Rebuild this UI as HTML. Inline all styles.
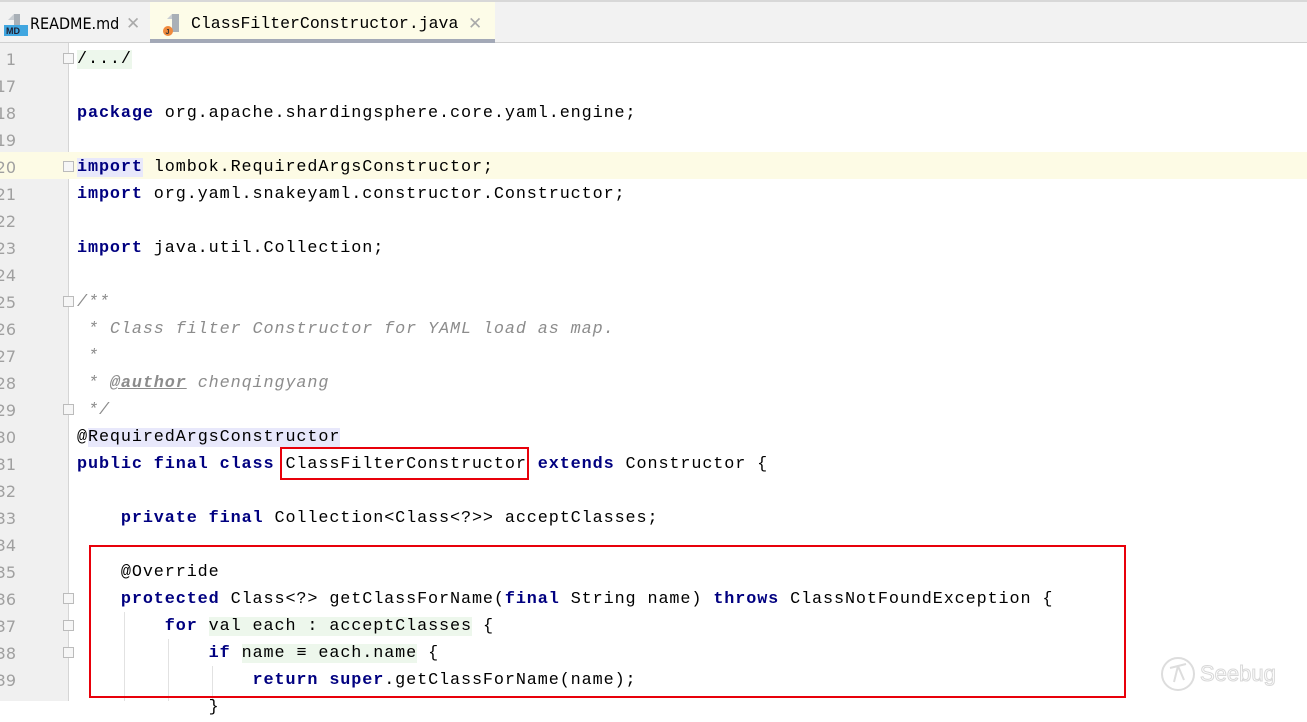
<!DOCTYPE html>
<html><head><meta charset="utf-8">
<style>
*{margin:0;padding:0;box-sizing:border-box}
body{width:1307px;height:701px;overflow:hidden;background:#fff;position:relative;font-family:"Liberation Mono",monospace}
.tabs{position:absolute;left:0;top:0;width:1307px;height:43px;background:#f2f2f2;border-top:2px solid #d8d8d8;border-bottom:1px solid #d0d0d0}
.tab{position:absolute;top:0;height:41px;font-size:15px;line-height:43px;color:#000;font-family:"Liberation Sans",sans-serif}
.act{left:150px;width:345px;background:#fdfce8;border-bottom:4px solid #a3a9b7}
.gut{position:absolute;left:0;top:43px;width:69px;height:658px;background:#f0f0f0;border-right:1px solid #d5d5d5}
.hl{position:absolute;left:0;top:152px;width:1307px;height:27px;background:#fdfbe5}
.ln{position:absolute;right:1291px;width:40px;text-align:right;font-size:16px;color:#a0a0a0;font-family:"DejaVu Sans",sans-serif;height:27px;line-height:29px}
.c{position:absolute;left:77px;height:27px;line-height:29px;font-size:16.8px;letter-spacing:0.9px;white-space:pre;color:#000}
.k{color:#000080;font-weight:bold}
.cm{color:#8c8c8c;font-style:italic}
.g{background:#edf7ec}
.a{background:#e8e8fb}
.fold{position:absolute;left:63px;width:11px;height:11px;border:1px solid #bbb;background:#f6f6f6}
.rb{position:absolute;border:2px solid #e8000a}
.guide{position:absolute;width:1px;background:#e2e2e2}
</style></head><body>
<div class="tabs">
  <div class="tab" style="left:4px;width:146px">
    <svg style="position:absolute;left:0px;top:11px" width="24" height="24"><path d="M10 1h6v12H10z" fill="#a9b0b7"/><path d="M10 1l-6 6h6z" fill="#c9ced3"/><rect x="0" y="12" width="24" height="11" fill="#40a6e0"/><text x="2" y="21" font-size="9" font-family="Liberation Sans" fill="#223" font-weight="bold">MD</text></svg>
    <span style="position:absolute;left:26px;font-size:16px;font-family:'DejaVu Sans Condensed','DejaVu Sans',sans-serif">README.md</span>
    <span style="position:absolute;left:122px;color:#aaa;font-size:17px">✕</span>
  </div>
  <div class="tab act">
    <svg style="position:absolute;left:12px;top:10px" width="22" height="24"><path d="M10 2h7v18H10z" fill="#a9b0b7"/><path d="M10 2l-5 5h5z" fill="#c9ced3"/><circle cx="6" cy="19" r="5" fill="#f08a3c"/><text x="3.5" y="22" font-size="7" font-family="Liberation Sans" fill="#333" font-weight="bold">J</text></svg>
    <span style="position:absolute;left:41px;font-size:16.5px;font-family:'Liberation Mono',monospace">ClassFilterConstructor.java</span>
    <span style="position:absolute;left:318px;color:#aaa;font-size:17px">✕</span>
  </div>
</div>
<div class="gut"></div>
<div class="hl"></div>

<div class="ln" style="top:45px">1</div>
<div class="ln" style="top:72px">17</div>
<div class="ln" style="top:99px">18</div>
<div class="ln" style="top:126px">19</div>
<div class="ln" style="top:153px">20</div>
<div class="ln" style="top:180px">21</div>
<div class="ln" style="top:207px">22</div>
<div class="ln" style="top:234px">23</div>
<div class="ln" style="top:261px">24</div>
<div class="ln" style="top:288px">25</div>
<div class="ln" style="top:315px">26</div>
<div class="ln" style="top:342px">27</div>
<div class="ln" style="top:369px">28</div>
<div class="ln" style="top:396px">29</div>
<div class="ln" style="top:423px">30</div>
<div class="ln" style="top:450px">31</div>
<div class="ln" style="top:477px">32</div>
<div class="ln" style="top:504px">33</div>
<div class="ln" style="top:531px">34</div>
<div class="ln" style="top:558px">35</div>
<div class="ln" style="top:585px">36</div>
<div class="ln" style="top:612px">37</div>
<div class="ln" style="top:639px">38</div>
<div class="ln" style="top:666px">39</div>

<div class="fold" style="top:53px"></div>
<div class="fold" style="top:161px"></div>
<div class="fold" style="top:296px"></div>
<div class="fold" style="top:404px"></div>
<div class="fold" style="top:593px"></div>
<div class="fold" style="top:620px"></div>
<div class="fold" style="top:647px"></div>

<div class="guide" style="left:124px;top:612px;height:89px"></div>
<div class="guide" style="left:168px;top:639px;height:62px"></div>
<div class="guide" style="left:212px;top:666px;height:35px"></div>

<div class="c" style="top:45px"><span class="g">/.../</span></div>
<div class="c" style="top:99px"><span class="k">package</span> org.apache.shardingsphere.core.yaml.engine;</div>
<div class="c" style="top:153px"><span class="k a">import</span> lombok.RequiredArgsConstructor;</div>
<div class="c" style="top:180px"><span class="k">import</span> org.yaml.snakeyaml.constructor.Constructor;</div>
<div class="c" style="top:234px"><span class="k">import</span> java.util.Collection;</div>
<div class="c cm" style="top:288px">/**</div>
<div class="c cm" style="top:315px"> * Class filter Constructor for YAML load as map.</div>
<div class="c cm" style="top:342px"> *</div>
<div class="c cm" style="top:369px"> * <b style="text-decoration:underline">@author</b> chenqingyang</div>
<div class="c cm" style="top:396px"> */</div>
<div class="c" style="top:423px">@<span class="a">RequiredArgsConstructor</span></div>
<div class="c" style="top:450px"><span class="k">public final class</span> ClassFilterConstructor <span class="k">extends</span> Constructor {</div>
<div class="c" style="top:504px">    <span class="k">private final</span> Collection&lt;Class&lt;?&gt;&gt; acceptClasses;</div>
<div class="c" style="top:558px">    @Override</div>
<div class="c" style="top:585px">    <span class="k">protected</span> Class&lt;?&gt; getClassForName(<span class="k">final</span> String name) <span class="k">throws</span> ClassNotFoundException {</div>
<div class="c" style="top:612px">        <span class="k">for</span> <span class="g">val each : acceptClasses</span> {</div>
<div class="c" style="top:639px">            <span class="k">if</span> <span class="g">name ≡ each.name</span> {</div>
<div class="c" style="top:666px">                <span class="k">return super</span>.getClassForName(name);</div>
<div class="c" style="top:693px">            }</div>

<div class="rb" style="left:280px;top:447px;width:249px;height:33px"></div>
<div class="rb" style="left:89px;top:545px;width:1037px;height:153px"></div>

<svg style="position:absolute;left:1160px;top:652px" width="125" height="44">
<circle cx="18" cy="22" r="16" fill="none" stroke="#ddd" stroke-width="2"/>
<path d="M10 16l16-4M18 14l-4 16M18 14l6 14" stroke="#ddd" stroke-width="2" fill="none"/>
<text x="40" y="29" font-family="Liberation Sans" font-size="22" fill="none" stroke="#d8d8d8" stroke-width="1">Seebug</text>
</svg>
</body></html>
